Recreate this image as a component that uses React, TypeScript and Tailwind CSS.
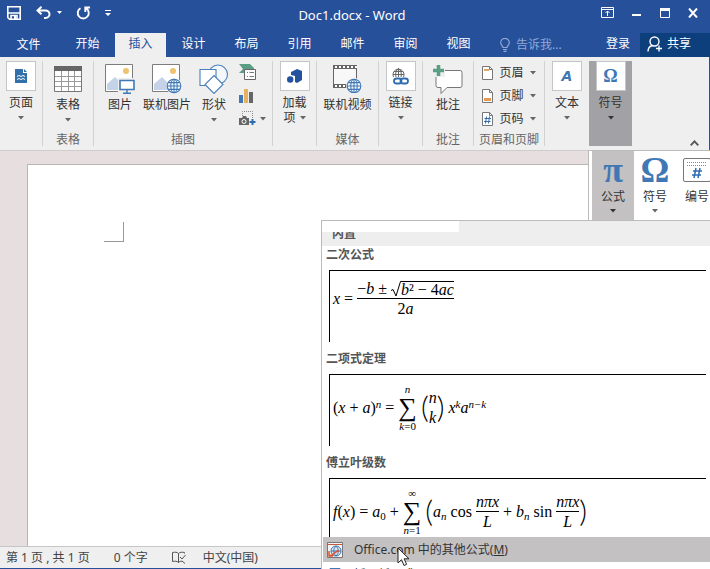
import type { ReactNode } from "react";

const TABS = ["开始", "插入", "设计", "布局", "引用", "邮件", "审阅", "视图"];

function Caret({ dark = false }: { dark?: boolean }) {
  return <svg width="6" height="4" viewBox="0 0 6 4" className={dark ? "shrink-0 fill-[#333]" : "shrink-0 fill-[#666]"}><path d="M0 0h6L3 3.5z" /></svg>;
}

function Group({ className, caption, children }: { className: string; caption?: string; children: ReactNode }) {
  return (
    <section className={`flex shrink-0 flex-col ${className}`}>
      <div className="flex h-[69px] justify-center">{children}</div>
      <div className="flex h-5 items-center justify-center whitespace-nowrap text-[#666]">{caption}</div>
    </section>
  );
}

function Divider() {
  return <div className="mb-1 w-px shrink-0 bg-[#d2d2d2]" />;
}

function BigButton({ icon, label, caret, className = "w-10" }: { icon: ReactNode; label: string; caret?: boolean; className?: string }) {
  return (
    <button type="button" className={`flex shrink-0 flex-col items-center whitespace-nowrap ${className}`}>
      <span className="flex h-9 items-center justify-center">{icon}</span>
      <span className="leading-4">{label}</span>
      {caret && <span className="flex h-3.5 items-center"><Caret /></span>}
    </button>
  );
}

function BoxButton({ icon, label, dark }: { icon: ReactNode; label: string; dark?: boolean }) {
  return (
    <button type="button" className="flex shrink-0 flex-col items-center whitespace-nowrap">
      <span className="mb-1 flex size-[30px] items-center justify-center border border-[#c6c6c6] bg-white">{icon}</span>
      <span className="leading-4">{label}</span>
      <span className="flex h-3.5 items-center"><Caret dark={dark} /></span>
    </button>
  );
}

function Globe({ x, y }: { x: number; y: number }) {
  return (
    <g transform={`translate(${x} ${y})`} fill="none" stroke="#3f78b4" strokeWidth="1.1">
      <circle cx="7" cy="7" r="6.8" fill="#f4f8fc" />
      <ellipse cx="7" cy="7" rx="3.2" ry="6.8" />
      <path d="M7 .2v13.6M.2 7h13.6M1.3 3.6h11.4M1.3 10.4h11.4" />
    </g>
  );
}

function Photo() {
  return (
    <>
      <path d="M.5.5h27v27H.5z" fill="#fff" stroke="#7d7d7d" />
      <circle cx="21" cy="7" r="3" fill="#eec36f" />
      <path d="M2 26v-6l8-7 6 6v7z" fill="#c5d3e8" />
    </>
  );
}

function PictureIcon() {
  return (
    <svg width="30" height="30" viewBox="0 0 30 30">
      <Photo />
      <path d="M13 14h17v16H13z" fill="#efefef" />
      <path d="M15 16.5h14v9H15z" fill="#fff" stroke="#3f78b4" strokeWidth="1.6" />
      <path d="M22 26v3M18 29.3h8" stroke="#3f78b4" strokeWidth="1.4" />
    </svg>
  );
}

function OnlinePictureIcon() {
  return <svg width="30" height="30" viewBox="0 0 30 30"><Photo /><circle cx="22.5" cy="22.5" r="8" fill="#efefef" /><Globe x={15} y={15} /></svg>;
}

function TableIcon() {
  return (
    <svg width="28" height="26" viewBox="0 0 28 26">
      <path d="M.5.5h27v25H.5z" fill="#fff" stroke="#777" />
      <path d="M0 0h28v5H0z" fill="#666" />
      <path d="M1 10.5h26M1 15.5h26M1 20.5h26M7.5 5v20M14.5 5v20M20.5 5v20" stroke="#9a9a9a" />
    </svg>
  );
}

function ShapesIcon() {
  return (
    <svg width="30" height="30" viewBox="0 0 30 30" stroke="#4a80ba" strokeWidth="1.1" fill="#fff">
      <circle cx="19" cy="10.5" r="9.5" fill="#f4f7fb" />
      <path d="M1 5.5h16v16H1z" />
      <path d="M15 11.5l9 9-9 9-9-9z" />
    </svg>
  );
}

function PageIcon() {
  return (
    <svg width="12" height="14" viewBox="0 0 12 14">
      <path d="M0 0h8v4h4v10H0z" fill="#336fa9" />
      <path d="M9 0l3 3H9z" fill="#336fa9" />
      <path d="M2 7.5l2-1 2 1 2-1 2 1M2 10.5l2-1 2 1 2-1 2 1" stroke="#fff" fill="none" />
    </svg>
  );
}

function SmartArtIcon() {
  return (
    <svg width="17" height="17" viewBox="0 0 17 17">
      <path d="M0 0h11l4 4v2H5v3H0l4-4z" fill="#5a9e83" />
      <path d="M5.5 5.5h11v10h-11z" fill="#fff" stroke="#666" />
      <path d="M8 8.5h1M8 12.5h1M10.5 8.5H15M10.5 12.5H15" stroke="#777" />
    </svg>
  );
}

function ChartIcon() {
  return <svg width="15" height="14" viewBox="0 0 15 14"><path d="M0 6h4v8H0z" fill="#3f78b4" /><path d="M5 0h4v14H5z" fill="#e8b162" /><path d="M10 3h4v11h-4z" fill="#666" /></svg>;
}

function ScreenshotIcon() {
  return (
    <svg width="17" height="15" viewBox="0 0 17 15">
      <path d="M3.5 5V.5h10V7" fill="none" stroke="#888" strokeDasharray="1 1" />
      <path d="M0 7h3l1-2h3l1 2h2v7H0z" fill="#666" />
      <circle cx="5" cy="10.5" r="2" fill="#666" stroke="#fff" />
      <path d="M13.500 8v6M10.500 11h6" stroke="#2f6cb0" strokeWidth="2" />
    </svg>
  );
}

function AddinIcon() {
  return <svg width="15" height="15" viewBox="0 0 15 15" fill="#2552a0"><path d="M4 3l6-3 5 2v9l-5 3-2-1V7L4 6z" /><circle cx="3.2" cy="10.5" r="3.2" /></svg>;
}

function VideoIcon() {
  return (
    <svg width="29" height="28" viewBox="0 0 29 28">
      <path d="M0 0h24v23H0z" fill="#666" />
      <path d="M1 4h22v15H1z" fill="#f8f8f8" />
      <path d="M2 2h22M2 21h22" stroke="#fff" strokeWidth="2" strokeDasharray="2 2" />
      <circle cx="21" cy="21" r="8" fill="#efefef" />
      <Globe x={14} y={14} />
    </svg>
  );
}

function LinkIcon() {
  return (
    <svg width="17" height="17" viewBox="0 0 17 17" fill="none">
      <g stroke="#666"><path d="M1.500 9a5.500 5.500 0 1 1 10 0M1 6.500h11M2 3.500h9M6.500.500V9M4 9c-1-3 0-7 2.500-8.500C9 2 10 6 9 9" /></g>
      <g stroke="#2f6cb0" strokeWidth="1.8"><rect x="2" y="10.500" width="7.500" height="5" rx="2.500" /><rect x="8.500" y="10.500" width="7.500" height="5" rx="2.500" /></g>
    </svg>
  );
}

function CommentIcon() {
  return (
    <svg width="30" height="29" viewBox="0 0 30 29">
      <path d="M5 5.500h22q2 0 2 2v13q0 2-2 2H14l-6 6v-6H5q-2 0-2-2v-13q0-2 2-2z" fill="#fff" stroke="#777" />
      <path d="M0 0h12v12H0z" fill="#efefef" />
      <path d="M5.500 0v11M0 5.500h11" stroke="#5a9e83" strokeWidth="3.6" />
    </svg>
  );
}

function HeaderRow({ label, children }: { label: string; children: ReactNode }) {
  return (
    <button type="button" className="flex h-[23px] items-center gap-1.5 whitespace-nowrap">
      <svg width="11" height="14" viewBox="0 0 11 14">
        <path d="M.5.5h7l3 3v10H.5z" fill="#fff" stroke="#777" />
        <path d="M7.5.5v3h3" fill="none" stroke="#777" />
        {children}
      </svg>
      {label}
      <Caret />
    </button>
  );
}

function TitleBar() {
  return (
    <div className="grid h-[33px] grid-cols-[1fr_auto_1fr] items-center text-white">
      <div className="flex items-center pb-2 pl-[7px]">
        <button type="button" aria-label="保存"><svg width="14" height="14" viewBox="0 0 14 14"><path d="M.8.8h12.400v12.400H2.500L.8 11.500z" fill="none" stroke="#fff" strokeWidth="1.6" /><path d="M1 7h12M4 13V9.500h6V13" fill="none" stroke="#fff" strokeWidth="1.6" /><path d="M7 10h2v3H7z" fill="#fff" /></svg></button>
        <button type="button" aria-label="撤消" className="ml-[15px] flex items-center gap-1.5">
          <svg width="15" height="13" viewBox="0 0 15 13" fill="none" stroke="#fff" strokeWidth="2"><path d="M1.500 4.500h8a4 3.700 0 0 1 0 7.400H8M5.500.7l-4 3.800 4 3.800" /></svg>
          <svg width="5" height="3" viewBox="0 0 5 3" fill="#fff"><path d="M0 0h5L2.500 3z" /></svg>
        </button>
        <button type="button" aria-label="重复" className="ml-[14px]"><svg width="15" height="14" viewBox="0 0 15 14" fill="none" stroke="#fff" strokeWidth="1.9"><path d="M4.500 2.200A5.500 5.500 0 1 0 10 2.200M9.300 6V1.500H14" /></svg></button>
        <button type="button" aria-label="自定义快速访问工具栏" className="ml-[14px]"><svg width="6" height="6" viewBox="0 0 6 6" fill="#fff"><path d="M0 0h6v1H0zM0 3h6L3 6z" /></svg></button>
      </div>
      <h1 className="pr-1.5 pb-1 text-[13px] leading-5">Doc1.docx - Word</h1>
      <div className="flex items-center justify-end gap-[18px] pr-3 pb-2">
        <button type="button" aria-label="功能区显示选项"><svg width="13" height="11" viewBox="0 0 13 11" fill="none" stroke="#fff"><path d="M.5.5h12v10H.5zM.5 2.500h12M6.500 9v-5M4.500 6l2-2 2 2" /></svg></button>
        <button type="button" aria-label="最小化"><svg width="10" height="10" viewBox="0 0 10 10"><path d="M0 6h9v2H0z" fill="#fff" /></svg></button>
        <button type="button" aria-label="最大化"><svg width="10" height="10" viewBox="0 0 10 10"><path d="M.5.5h9v9h-9z" fill="none" stroke="#fff" /><path d="M0 0h10v3H0z" fill="#fff" /></svg></button>
        <button type="button" aria-label="关闭"><svg width="10" height="10" viewBox="0 0 10 10"><path d="M1 .5l8 9M9 .5l-8 9" stroke="#fff" strokeWidth="2" /></svg></button>
      </div>
    </div>
  );
}

function TabRow() {
  return (
    <nav className="flex h-6 items-stretch whitespace-nowrap text-white">
      <button type="button" className="mr-[5px] w-[57px]">文件</button>
      <div className="flex gap-0.5">
        {TABS.map((t) => (
          <button key={t} type="button" className={t === "插入" ? "w-[51px] bg-[#efefef] pb-0.5 text-[#27509b]" : "w-[51px] pb-0.5"}>{t}</button>
        ))}
      </div>
      <button type="button" className="ml-4 flex items-center gap-1.5 text-[#90a9d5]">
        <svg width="10" height="14" viewBox="0 0 10 14" fill="none" stroke="currentColor" strokeWidth="1.2"><path d="M3 9.500C3 8 .7 7 .7 4.700a4.300 4.300 0 0 1 8.600 0C9.300 7 7 8 7 9.500zM3 11.500h4M3.500 13.300h3" /></svg>
        告诉我...
      </button>
      <button type="button" className="ml-auto pr-2.5 pb-0.5">登录</button>
      <button type="button" className="flex w-[70px] items-center gap-1 bg-[#0d3f7d] pl-[7px] pb-0.5">
        <svg width="16" height="16" viewBox="0 0 16 16" fill="none" stroke="#fff" strokeWidth="1.4"><circle cx="7.500" cy="5.500" r="4.500" /><path d="M1 15.500c0-3.500 2-5.500 4.500-6M12 9.500v6M9 12.500h6" /></svg>
        共享
      </button>
    </nav>
  );
}

function Ribbon() {
  return (
    <div className="flex h-[93px] border-r border-[#27509b] bg-[#efefef] pt-1 text-[#333]">
      <Group className="w-[42px]"><BoxButton icon={<PageIcon />} label="页面" /></Group>
      <Divider />
      <Group className="w-[50px]" caption="表格"><BigButton icon={<TableIcon />} label="表格" caret /></Group>
      <Divider />
      <Group className="w-[178px]" caption="插图">
        <BigButton icon={<PictureIcon />} label="图片" className="w-[42px]" />
        <BigButton icon={<OnlinePictureIcon />} label="联机图片" className="w-[52px]" />
        <BigButton icon={<ShapesIcon />} label="形状" caret className="w-[42px]" />
        <div className="flex w-8 flex-col pl-1">
          <button type="button" aria-label="SmartArt" className="flex h-[23px] items-center"><SmartArtIcon /></button>
          <button type="button" aria-label="图表" className="flex h-[23px] items-center"><ChartIcon /></button>
          <button type="button" aria-label="屏幕截图" className="flex h-[23px] items-center gap-1"><ScreenshotIcon /><Caret /></button>
        </div>
      </Group>
      <Divider />
      <Group className="w-[43px]">
        <button type="button" className="flex flex-col items-center">
          <span className="mb-1 flex size-[30px] items-center justify-center border border-[#c6c6c6] bg-white"><AddinIcon /></span>
          <span className="leading-4">加载</span>
          <span className="flex items-center gap-1 leading-[14px]">项<Caret /></span>
        </button>
      </Group>
      <Divider />
      <Group className="w-[61px]" caption="媒体"><BigButton icon={<VideoIcon />} label="联机视频" className="w-[52px]" /></Group>
      <Divider />
      <Group className="w-[43px]"><BoxButton icon={<LinkIcon />} label="链接" /></Group>
      <Divider />
      <Group className="w-[50px]" caption="批注"><BigButton icon={<CommentIcon />} label="批注" /></Group>
      <Divider />
      <Group className="w-[70px]" caption="页眉和页脚">
        <div className="flex flex-col">
          <HeaderRow label="页眉"><path d="M2 3h5v2H2z" fill="#dda76a" /></HeaderRow>
          <HeaderRow label="页脚"><path d="M2 9h7v3H2z" fill="#e29a55" /></HeaderRow>
          <HeaderRow label="页码"><path d="M4.500 4.500l-1 7M7.500 4.500l-1 7M2.500 6.500H9M2 9.500h6.500" stroke="#2f6cb0" /></HeaderRow>
        </div>
      </Group>
      <Divider />
      <Group className="w-11"><BoxButton icon={<span className="font-['DejaVu_Sans'] text-[14px] leading-none font-bold text-[#3f78b4] italic">A</span>} label="文本" /></Group>
      <Group className="mb-1 w-[43px] bg-[#a2a1a5]"><BoxButton dark icon={<span className="font-['Liberation_Serif'] text-[18px] leading-none font-bold text-[#3f78b4]">Ω</span>} label="符号" /></Group>
      <button type="button" aria-label="折叠功能区" className="mt-auto mr-2.5 mb-1 ml-auto"><svg width="9" height="6" viewBox="0 0 9 6"><path d="M.7 5.300l3.800-4 3.800 4" fill="none" stroke="#555" strokeWidth="1.8" /></svg></button>
    </div>
  );
}

function Frac({ top, bottom }: { top: ReactNode; bottom: ReactNode }) {
  return (
    <span className="flex flex-col items-center">
      <span className="flex h-5 items-center border-b border-black">{top}</span>
      <span className="flex h-5 items-center">{bottom}</span>
    </span>
  );
}

function Sum({ from, to }: { from: ReactNode; to: ReactNode }) {
  return (
    <span className="flex flex-col items-center text-[11px] leading-[11px]">
      <span>{to}</span>
      <span className="text-[26px] leading-[26px]">∑</span>
      <span>{from}</span>
    </span>
  );
}

function Paren({ children }: { children: string }) {
  return <span className="pb-1 font-['Lato'] text-[30px] leading-8 font-light">{children}</span>;
}

function Formula({ title, children }: { title: string; children: ReactNode }) {
  return (
    <button type="button" className="flex h-[104px] w-full shrink-0 flex-col justify-start text-left">
      <span className="h-[18px] pl-1 leading-[18px] font-bold text-[#555]">{title}</span>
      <span className="mt-1.5 mr-1 ml-[7px] flex h-[72px] items-start self-stretch border-t border-l border-black pl-[3px] font-['Liberation_Serif',serif] text-base whitespace-nowrap text-black">{children}</span>
    </button>
  );
}

function EquationMenu() {
  return (
    <div className="absolute top-[220px] right-0 bottom-0 flex w-[389px] flex-col overflow-hidden border-t border-l border-[#bbb] bg-white">
      <div className="h-[25px] shrink-0 bg-[#eee] pl-2.5 leading-[25px] font-bold text-[#555]">内置</div>
      <div className="absolute -top-px -left-px h-3 w-[138px] bg-white" />
      <div className="flex min-h-0 flex-1 flex-col overflow-hidden">
        <Formula title="二次公式">
          <span className="flex h-14 items-center gap-1">
            <span><i>x</i> =</span>
            <Frac
              top={<><span>−<i>b</i> ± </span><span className="ml-1 flex items-center"><svg width="10" height="16" viewBox="0 0 10 16" fill="none" stroke="#000"><path d="M0 9.500l2-1 3 6.500L9.500.5H10" /></svg><span className="h-4 border-t border-black leading-4"><i>b</i>² − 4<i>ac</i></span></span></>}
              bottom={<span>2<i>a</i></span>}
            />
          </span>
        </Formula>
        <Formula title="二项式定理">
          <span className="flex h-[66px] items-center gap-1">
            <span>(<i>x</i> + <i>a</i>)<sup className="text-[11px] italic">n</sup> =</span>
            <Sum to={<i>n</i>} from={<><i>k</i>=0</>} />
            <span className="flex items-center">
              <Paren>(</Paren>
              <span className="flex flex-col items-center leading-5 italic"><span>n</span><span>k</span></span>
              <Paren>)</Paren>
            </span>
            <span className="italic">x<sup className="text-[11px]">k</sup>a<sup className="text-[11px]">n−k</sup></span>
          </span>
        </Formula>
        <Formula title="傅立叶级数">
          <span className="flex h-[66px] items-center gap-1">
            <span><i>f</i>(<i>x</i>) = <i>a</i><sub className="text-[11px]">0</sub> +</span>
            <Sum to="∞" from={<><i>n</i>=1</>} />
            <span className="flex items-center">
              <Paren>(</Paren>
              <span><i>a</i><sub className="text-[11px] italic">n</sub> cos</span>
            </span>
            <Frac top={<i>nπx</i>} bottom={<i>L</i>} />
            <span>+ <i>b</i><sub className="text-[11px] italic">n</sub> sin</span>
            <span className="flex items-center">
              <Frac top={<i>nπx</i>} bottom={<i>L</i>} />
              <Paren>)</Paren>
            </span>
          </span>
        </Formula>
      </div>
      <div className="h-8 shrink-0 overflow-hidden pl-px text-[#333]">
        <button type="button" className="relative flex h-[25px] w-full items-center gap-[11px] bg-[#c3c1c2] pl-1">
          <svg width="16" height="16" viewBox="0 0 16 16">
            <path d="M.5.5h15v15H.5z" fill="#f4f4f4" stroke="#777" />
            <path d="M1 2.500h14" stroke="#c55a3a" />
            <circle cx="9" cy="9" r="5" fill="#dbe7f3" stroke="#3f78b4" />
            <path d="M4 9h10M9 4c-3 3-3 7 0 10M9 4c3 3 3 7 0 10" fill="none" stroke="#3f78b4" />
            <path d="M2 13.500c4 1 5-4 10-5M2 9v5h4" fill="none" stroke="#d9532c" strokeWidth="1.5" />
          </svg>
          <span>Office.com 中的其他公式(<u>M</u>)</span>
          <svg width="14" height="20" viewBox="0 0 14 20" className="absolute top-2.5 left-[74px]"><path d="M1 1v15l3.500-3.300L7 18.500l2.600-1.200-2.500-5.500H12z" fill="#fff" stroke="#222" /></svg>
        </button>
        <button type="button" className="flex h-[25px] w-full items-center gap-[11px] pl-1">
          <svg width="16" height="14" viewBox="0 0 16 14"><path d="M3 .5h10v13H3z" fill="#fff" stroke="#3f78b4" /></svg>
          <span>插入新公式(I)</span>
        </button>
      </div>
    </div>
  );
}

function SymbolItem({ icon, label, caret, active }: { icon: ReactNode; label: string; caret?: boolean; active?: boolean }) {
  return (
    <button type="button" className={`flex w-[42px] shrink-0 flex-col items-center ${active ? "bg-[#c3c1c2]" : ""}`}>
      <span className="flex h-[38px] items-center justify-center font-['Liberation_Serif'] text-[36px] leading-9 font-bold text-[#3f78b4]">{icon}</span>
      <span className="leading-4 whitespace-nowrap">{label}</span>
      {caret && <span className="flex h-3 items-center"><Caret dark={active} /></span>}
    </button>
  );
}

function SymbolMenu() {
  return (
    <div className="absolute top-[150px] right-0 flex h-[71px] w-[122px] overflow-hidden border-t border-b border-l border-[#bbb] bg-white pl-[3px] text-[#333]">
      <SymbolItem icon="π" label="公式" caret active />
      <SymbolItem icon="Ω" label="符号" caret />
      <SymbolItem
        label="编号"
        icon={<svg width="28" height="24" viewBox="0 0 28 24" fill="none"><rect x=".5" y=".5" width="27" height="23" rx="1.5" fill="#fff" stroke="#777" /><path d="M4 4.500h20M4 7.500h20" stroke="#888" strokeDasharray="1 1" /><path d="M13 10l-2 10M17 10l-2 10M10 13h9M9 17h9" stroke="#2f6cb0" strokeWidth="1.5" /></svg>}
      />
    </div>
  );
}

export default function App() {
  return (
    <div className="relative flex h-screen flex-col overflow-hidden bg-[#e7dfdf] font-['Noto_Sans','Noto_Sans_CJK_SC',sans-serif] text-xs">
      <header className="shrink-0 bg-[#27509b]">
        <TitleBar />
        <TabRow />
      </header>
      <Ribbon />
      <main className="flex min-h-0 flex-1 border-t border-[#d0cccc] pt-[13px] pl-[27px]">
        <div className="flex-1 border-t border-l border-[#b9b5b5] bg-white pt-[57px] pl-[76px]">
          <div className="size-5 border-r border-b border-[#999]" />
        </div>
      </main>
      <footer className="flex h-[23px] shrink-0 items-center border-t border-b border-t-[#c6c6c6] border-b-[#27509b] bg-[#efefef] pl-1.5 whitespace-nowrap text-[#444]">
        <span>第 1 页 , 共 1 页</span>
        <span className="ml-6">0 个字</span>
        <svg width="14" height="13" viewBox="0 0 14 13" fill="none" stroke="#555" className="ml-6"><path d="M6.500 2.500C5 1 3 1 .5 1.500v9c2.500-.5 4.500-.5 6 1 1-1 2-1.300 3.500-1.300M6.500 2.500v9M6.500 2.500C8 1 10 1 12.500 1.500v1M8 6l2 2 3.500-4M10 10l3 2.500" /></svg>
        <span className="ml-[17px]">中文(中国)</span>
      </footer>
      <EquationMenu />
      <SymbolMenu />
    </div>
  );
}
